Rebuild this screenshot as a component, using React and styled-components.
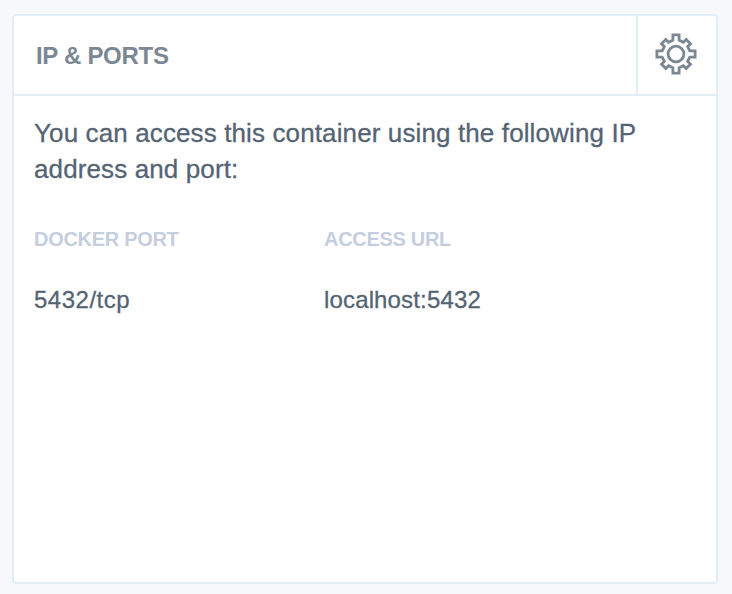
import React from "react";
import styled, { createGlobalStyle } from "styled-components";

const GlobalStyle = createGlobalStyle`
  *, *::before, *::after { box-sizing: border-box; }
  body {
    margin: 0;
    background: #f6f8fc;
    color: #556473;
    font-family: "Liberation Sans", Arial, sans-serif;
  }
`;

const Page = styled.main`
  height: 594px;
  padding: 14px 14px 10px 12px;
`;

const Card = styled.section`
  height: 100%;
  background: #fff;
  border: 2px solid #e4ecf5;
  border-radius: 4px;
  overflow: hidden;
`;

const CardHeader = styled.header`
  display: flex;
  height: 80px;
  border-bottom: 2px solid #e4ecf5;
`;

const Title = styled.h2`
  flex: 1;
  margin: 0;
  padding-left: 22px;
  font-size: 24px;
  line-height: 79px;
  letter-spacing: -0.3px;
  color: #7c8794;
`;

const SettingsButton = styled.button`
  display: flex;
  justify-content: center;
  width: 80px;
  padding: 16px 2px 0 0;
  border: 0;
  border-left: 2px solid #e4ecf5;
  background: none;
  color: #7c8794;
`;

const Description = styled.p`
  margin: 19px 20px 0;
  font-size: 26px;
  line-height: 36px;
  letter-spacing: 0.12px;
  -webkit-text-stroke: 0.3px currentColor;
`;

const PortTable = styled.dl`
  display: grid;
  grid-template-columns: 290px 1fr;
  row-gap: 34px;
  margin: 40px 20px 0;
`;

const Label = styled.dt`
  grid-row: 1;
  font-size: 20px;
  line-height: 24px;
  font-weight: 700;
  letter-spacing: -0.3px;
  color: #c5cedd;
`;

const Value = styled.dd`
  grid-row: 2;
  margin: 0;
  font-size: 24px;
  line-height: 30px;
  letter-spacing: ${(p) => p.$tracking}px;
  -webkit-text-stroke: 0.3px currentColor;
`;

const GearIcon = () => (
  <svg width="44" height="44" viewBox="-22 -22 44 44" fill="none" stroke="currentColor" strokeWidth="2.8" aria-hidden="true">
    <circle r="7.9" />
    <path d="M-3.1-19.1H3.1V-13.8L7.4-11.7L10.2-14.5L14.5-10.2L11.7-7.4L13.8-3.1H19.1V3.1H13.8L11.7 7.4L14.5 10.2L10.2 14.5L7.4 11.7L3.1 13.8V19.1H-3.1V13.8L-7.4 11.7L-10.2 14.5L-14.5 10.2L-11.7 7.4L-13.8 3.1H-19.1V-3.1H-13.8L-11.7-7.4L-14.5-10.2L-10.2-14.5L-7.4-11.7L-3.1-13.8Z" />
  </svg>
);

export default function App() {
  return (
    <>
      <GlobalStyle />
      <Page>
        <Card>
          <CardHeader>
            <Title>IP &amp; PORTS</Title>
            <SettingsButton aria-label="Settings">
              <GearIcon />
            </SettingsButton>
          </CardHeader>
          <Description>
            You can access this container using the following IP address and port:
          </Description>
          <PortTable>
            <Label>DOCKER PORT</Label>
            <Value $tracking={0.5}>5432/tcp</Value>
            <Label>ACCESS URL</Label>
            <Value $tracking={0.15}>localhost:5432</Value>
          </PortTable>
        </Card>
      </Page>
    </>
  );
}
